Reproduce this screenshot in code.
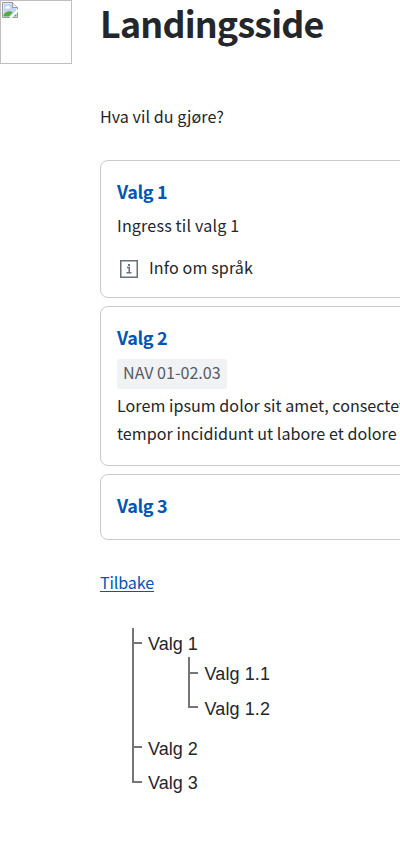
<script>
  const lorem = [
    'Lorem ipsum dolor sit amet, consectetur adipiscing elit, sed do eiusmod',
    'tempor incididunt ut labore et dolore magna aliqua.'
  ];
</script>

<div class="page">
  <div class="picture">
    <svg width="16" height="16" viewBox="0 0 16 16" aria-hidden="true">
      <path d="M.5.5h10l5 5v10H.5z" fill="#fff" stroke="#9b9b9b" />
      <path d="M1.500 1.500h9v4.500h4v2l-6 6.500h-7z" fill="#c3d4f5" />
      <path d="M3 6c0-1 1-1.500 1.700-1.200C5.200 3.200 7 3.500 7.200 5 8.200 5 8.500 6.500 7.500 6.500H3.500z" fill="#fff" />
      <path d="M1.500 14.500v-1.500c2.500-4.300 7-4.500 9-2.500L7 14.500z" fill="#55ad37" />
      <path d="M11 14.500l3.500-3v3z" fill="#55ad37" />
      <path d="M7.500 16l8.500-9v2.500L10 16z" fill="#fff" />
      <path d="M10.500.5v5h5" fill="#eee" stroke="#9b9b9b" />
    </svg>
  </div>
  <main>
    <h1>Landingsside</h1>
    <p class="lead">Hva vil du gjøre?</p>

    <div class="cards">
      <section class="card">
        <h2>Valg 1</h2>
        <p class="ingress">Ingress til valg 1</p>
        <div class="info">
          <svg width="18" height="18" viewBox="0 0 18 18" aria-hidden="true">
            <rect x=".75" y=".75" width="16.500" height="16.500" fill="none" stroke="#69707a" stroke-width="1.500" />
            <path d="M7 7.500h2.250v5M6.500 12.700h5" fill="none" stroke="#69707a" stroke-width="1.500" />
            <rect x="8" y="4" width="2" height="2" fill="#69707a" />
          </svg>
          <span>Info om språk</span>
        </div>
      </section>
      <section class="card second">
        <h2>Valg 2</h2>
        <span class="tag">NAV 01-02.03</span>
        <p class="lorem">{lorem[0]}<br />{lorem[1]}</p>
      </section>
      <section class="card third">
        <h2>Valg 3</h2>
      </section>
    </div>

    <a class="back" href="#tilbake"><span>Tilbake</span></a>

    <ul class="tree">
      <li class="first">
        <span>Valg 1</span>
        <ul class="sub">
          <li><span>Valg 1.1</span></li>
          <li class="last"><span>Valg 1.2</span></li>
        </ul>
      </li>
      <li class="two"><span>Valg 2</span></li>
      <li class="last three"><span>Valg 3</span></li>
    </ul>
  </main>
</div>

<style>
  :global(body) { overflow: hidden; background: #fff; }
  .page {
    display: flex;
    align-items: flex-start;
    width: 400px;
    height: 850px;
    overflow: hidden;
    color: #23262a;
    font: 16.100px/28px "Noto Sans CJK JP", "Noto Sans", sans-serif;
    box-sizing: border-box;
  }
  .picture {
    flex: none;
    width: 72px;
    height: 64px;
    box-sizing: border-box;
    border: 1px solid #c0c0c0;
    padding: 1px;
    margin-right: 28px;
  }
  svg { display: block; flex: none; }
  main { flex: none; width: 700px; }
  h1, h2, p, ul { margin: 0; padding: 0; }
  h1 {
    font-size: 35.800px;
    line-height: 45px;
    font-weight: 700;
    letter-spacing: -.8px;
    white-space: nowrap;
  }
  .lead { margin-top: 57px; letter-spacing: .05px; }
  .cards { display: flex; flex-direction: column; gap: 8px; margin-top: 30px; }
  .card {
    box-sizing: border-box;
    border: 1px solid #c9c9d1;
    border-radius: 8px;
    padding: 16px;
    height: 138px;
  }
  .second { height: 160px; }
  .third { height: 66px; }
  h2 {
    font-size: 18px;
    line-height: 28px;
    font-weight: 700;
    letter-spacing: -.35px;
    color: #0056b4;
  }
  .ingress { margin-top: 6px; letter-spacing: .17px; }
  .info {
    display: flex;
    align-items: flex-start;
    gap: 11px;
    padding-left: 3px;
    margin-top: 14px;
    letter-spacing: .12px;
  }
  .info svg { margin-top: 7px; }
  .tag {
    display: block;
    width: 110px;
    height: 30px;
    box-sizing: border-box;
    padding-left: 6px;
    margin-top: 8px;
    background: #f1f2f4;
    border-radius: 2px;
    color: #565c65;
    line-height: 27px;
    white-space: nowrap;
  }
  .lorem { margin-top: 2px; letter-spacing: .03px; white-space: nowrap; }
  .back { display: flex; margin-top: 29px; color: #0056b4; letter-spacing: -.12px; text-decoration: none; }
  .back span { height: 22px; line-height: 26px; border-bottom: 1px solid #0056b4; }
  .tree {
    list-style: none;
    margin: 36px 0 0 32px;
    font: 18px/24px "Liberation Sans", Arial, sans-serif;
  }
  li {
    position: relative;
    box-sizing: border-box;
    height: 35px;
    padding: 5px 0 0 16px;
  }
  li::before {
    content: "";
    position: absolute;
    left: 0;
    top: 0;
    width: 2px;
    height: 100%;
    background: #767676;
  }
  li::after {
    content: "";
    position: absolute;
    left: 2px;
    top: 14px;
    width: 8px;
    height: 2px;
    background: #767676;
  }
  li.last::before { height: 16px; }
  .first { height: 104px; padding-top: 4px; }
  .three { padding-top: 4px; }
  .sub { list-style: none; margin: 1px 0 0 40px; letter-spacing: .1px; }
  .sub li { padding-left: 16.500px; }
  .sub li:first-child::after { top: 15px; }
</style>
